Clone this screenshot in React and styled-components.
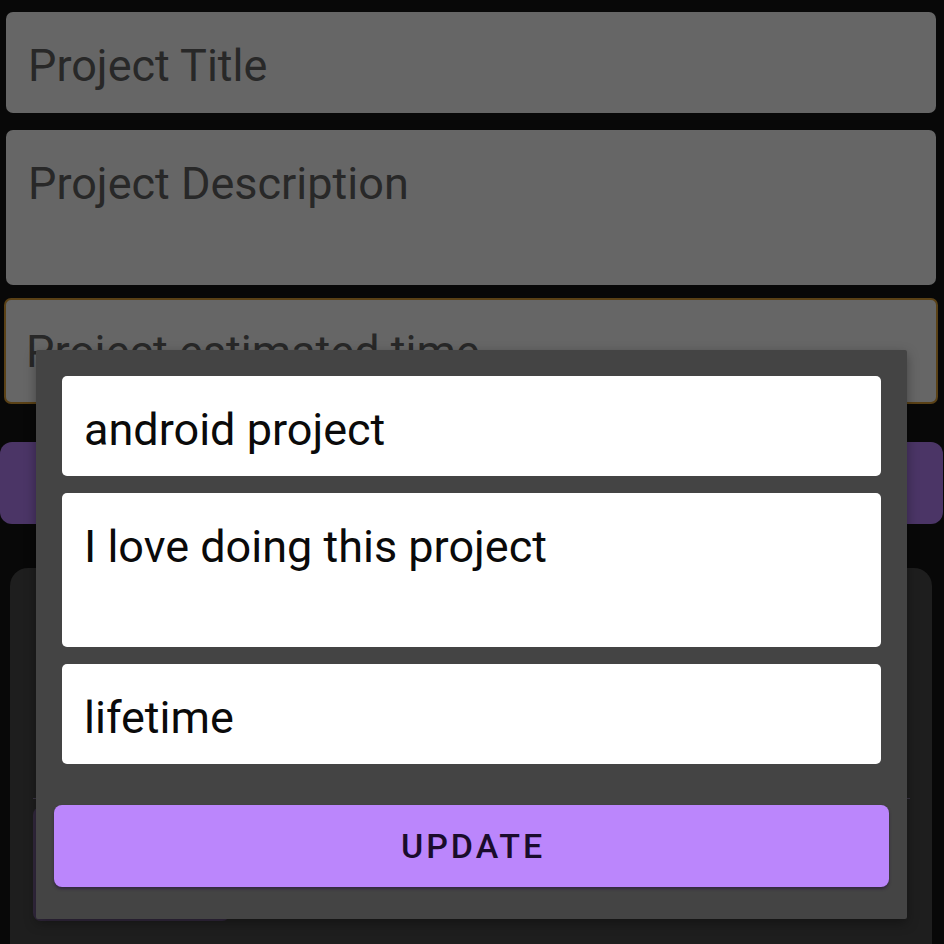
import React from "react";
import styled, { createGlobalStyle } from "styled-components";

const Global = createGlobalStyle`
  html, body { margin: 0; padding: 0; background: #080808; }
  body { font-family: Roboto, "Noto Sans", "Liberation Sans", sans-serif; overflow: hidden; }
  #root { width: 944px; height: 944px; position: relative; overflow: hidden; }
`;

const Screen = styled.div`
  position: relative;
  width: 944px;
  height: 944px;
  background: #080808;
  overflow: hidden;
`;

const Form = styled.div`
  display: flex;
  flex-direction: column;
  padding: 12px 8px 0 6px;
`;

const Field = styled.div`
  box-sizing: border-box;
  height: ${(p) => p.$h}px;
  margin-top: ${(p) => p.$mt || 0}px;
  margin-left: ${(p) => (p.$focused ? -2 : 0)}px;
  margin-right: ${(p) => (p.$focused ? -2 : 0)}px;
  padding: ${(p) => (p.$focused ? 25 : 27)}px ${(p) => (p.$focused ? 20 : 22)}px 0;
  background: #666666;
  border: ${(p) => (p.$focused ? "2px solid #5a4116" : "none")};
  border-radius: 7px;
  font-size: 45px;
  line-height: 53px;
  color: #282828;
  white-space: nowrap;
  overflow: hidden;
`;

const DimButton = styled.div`
  height: 82px;
  margin: 38px -7px 0 -6px;
  background: #4b3566;
  border-radius: 12px;
`;

const Card = styled.div`
  margin: 44px 12px 0 10px;
  height: 420px;
  background: #1e1e1e;
  border-radius: 18px;
  padding: 230px 22px 0 23px;
  box-sizing: border-box;
  display: flex;
  flex-direction: column;
`;

const Divider = styled.div`
  height: 1px;
  background: #3a3544;
`;

const CardButton = styled.div`
  width: 197px;
  height: 114px;
  margin-top: 8px;
  background: #33293f;
  border-radius: 8px;
`;

const Dialog = styled.div`
  position: absolute;
  left: 36px;
  top: 350px;
  width: 871px;
  height: 569px;
  box-sizing: border-box;
  background: #444444;
  border-radius: 2px;
  box-shadow: 0 4px 12px rgba(0, 0, 0, 0.35);
  padding: 26px 26px 0 26px;
  display: flex;
  flex-direction: column;
`;

const Input = styled.div`
  box-sizing: border-box;
  height: ${(p) => p.$h}px;
  margin-top: ${(p) => p.$mt || 0}px;
  padding: 27px 22px 0;
  background: #ffffff;
  border-radius: 5px;
  font-size: 45px;
  line-height: 53px;
  color: #0a0a0a;
  white-space: nowrap;
`;

const UpdateButton = styled.button`
  margin: 41px -8px 0 -8px;
  height: 82px;
  border: none;
  border-radius: 8px;
  background: #bb86fc;
  box-shadow: 0 2px 3px rgba(40, 20, 60, 0.6);
  font-family: Roboto, "Noto Sans", "Liberation Sans", sans-serif;
  font-weight: 500;
  font-size: 34px;
  letter-spacing: 3px;
  text-indent: 3px;
  color: #1a0c2c;
  display: flex;
  align-items: center;
  justify-content: center;
  padding: 0;
`;

export default function App() {
  return (
    <Screen>
      <Global />
      <Form>
        <Field $h={101}>Project Title</Field>
        <Field $h={155} $mt={17}>Project Description</Field>
        <Field $h={106} $mt={13} $focused>Project estimated time</Field>
        <DimButton />
      </Form>
      <Card>
        <Divider />
        <CardButton />
      </Card>
      <Dialog>
        <Input $h={100}>android project</Input>
        <Input $h={154} $mt={17}>I love doing this project</Input>
        <Input $h={100} $mt={17}>lifetime</Input>
        <UpdateButton>UPDATE</UpdateButton>
      </Dialog>
    </Screen>
  );
}
